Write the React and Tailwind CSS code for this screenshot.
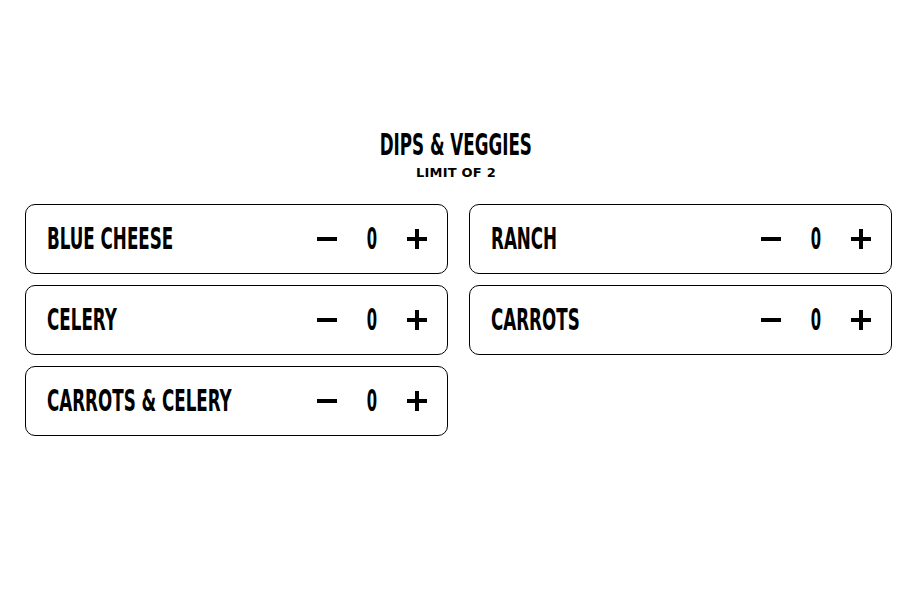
import { useState } from "react";

const items = ["Blue Cheese", "Ranch", "Celery", "Carrots", "Carrots & Celery"];

const condensed = {
  fontFamily: '"Liberation Sans Narrow", "DejaVu Sans Condensed", "Liberation Sans", sans-serif',
};

const Row = ({ name, count, onMinus, onPlus }) => {
  return (
    <div className="flex h-[70px] items-center rounded-[10px] border border-black pl-[21px] pr-[20px]">
      <div className="min-w-0 flex-1">
        <span
          className="inline-block origin-left scale-x-[0.62] whitespace-nowrap text-[30px] font-bold uppercase leading-none text-black"
          style={condensed}
        >
          {name}
        </span>
      </div>
      <div className="flex shrink-0 items-center">
        <button onClick={onMinus} className="flex h-5 w-5 items-center justify-center">
          <span className="block h-[4px] w-5 bg-black" />
        </button>
        <span
          className="inline-block w-[70px] scale-x-[0.55] text-center text-[30px] font-bold leading-none text-black"
          style={condensed}
        >
          {count}
        </span>
        <button onClick={onPlus} className="relative flex h-5 w-5 items-center justify-center">
          <span className="absolute h-[4px] w-5 bg-black" />
          <span className="absolute h-5 w-[4px] bg-black" />
        </button>
      </div>
    </div>
  );
};

const App = () => {
  const [counts, setCounts] = useState(items.map(() => 0));

  const change = (i, d) => {
    const total = counts.reduce((a, b) => a + b, 0);
    if (d > 0 && total >= 2) return;
    const next = [...counts];
    next[i] = Math.max(0, next[i] + d);
    setCounts(next);
  };

  return (
    <div className="min-h-screen bg-white pt-[130px]">
      <div className="flex flex-col items-center">
        <h2
          className="inline-block scale-x-[0.62] text-[30px] font-bold uppercase leading-none text-black"
          style={condensed}
        >
          Dips &amp; Veggies
        </h2>
        <p
          className="mt-[6px] text-[13px] font-bold uppercase leading-none tracking-[0.2px] text-black"
          style={{ fontFamily: '"DejaVu Sans", sans-serif' }}
        >
          Limit of 2
        </p>
      </div>
      <div className="mt-[25px] grid grid-cols-2 gap-x-[21px] gap-y-[11px] pl-[25px] pr-[20px]">
        {items.map((name, i) => (
          <Row
            key={name}
            name={name}
            count={counts[i]}
            onMinus={() => change(i, -1)}
            onPlus={() => change(i, 1)}
          />
        ))}
      </div>
    </div>
  );
};

export default App;
